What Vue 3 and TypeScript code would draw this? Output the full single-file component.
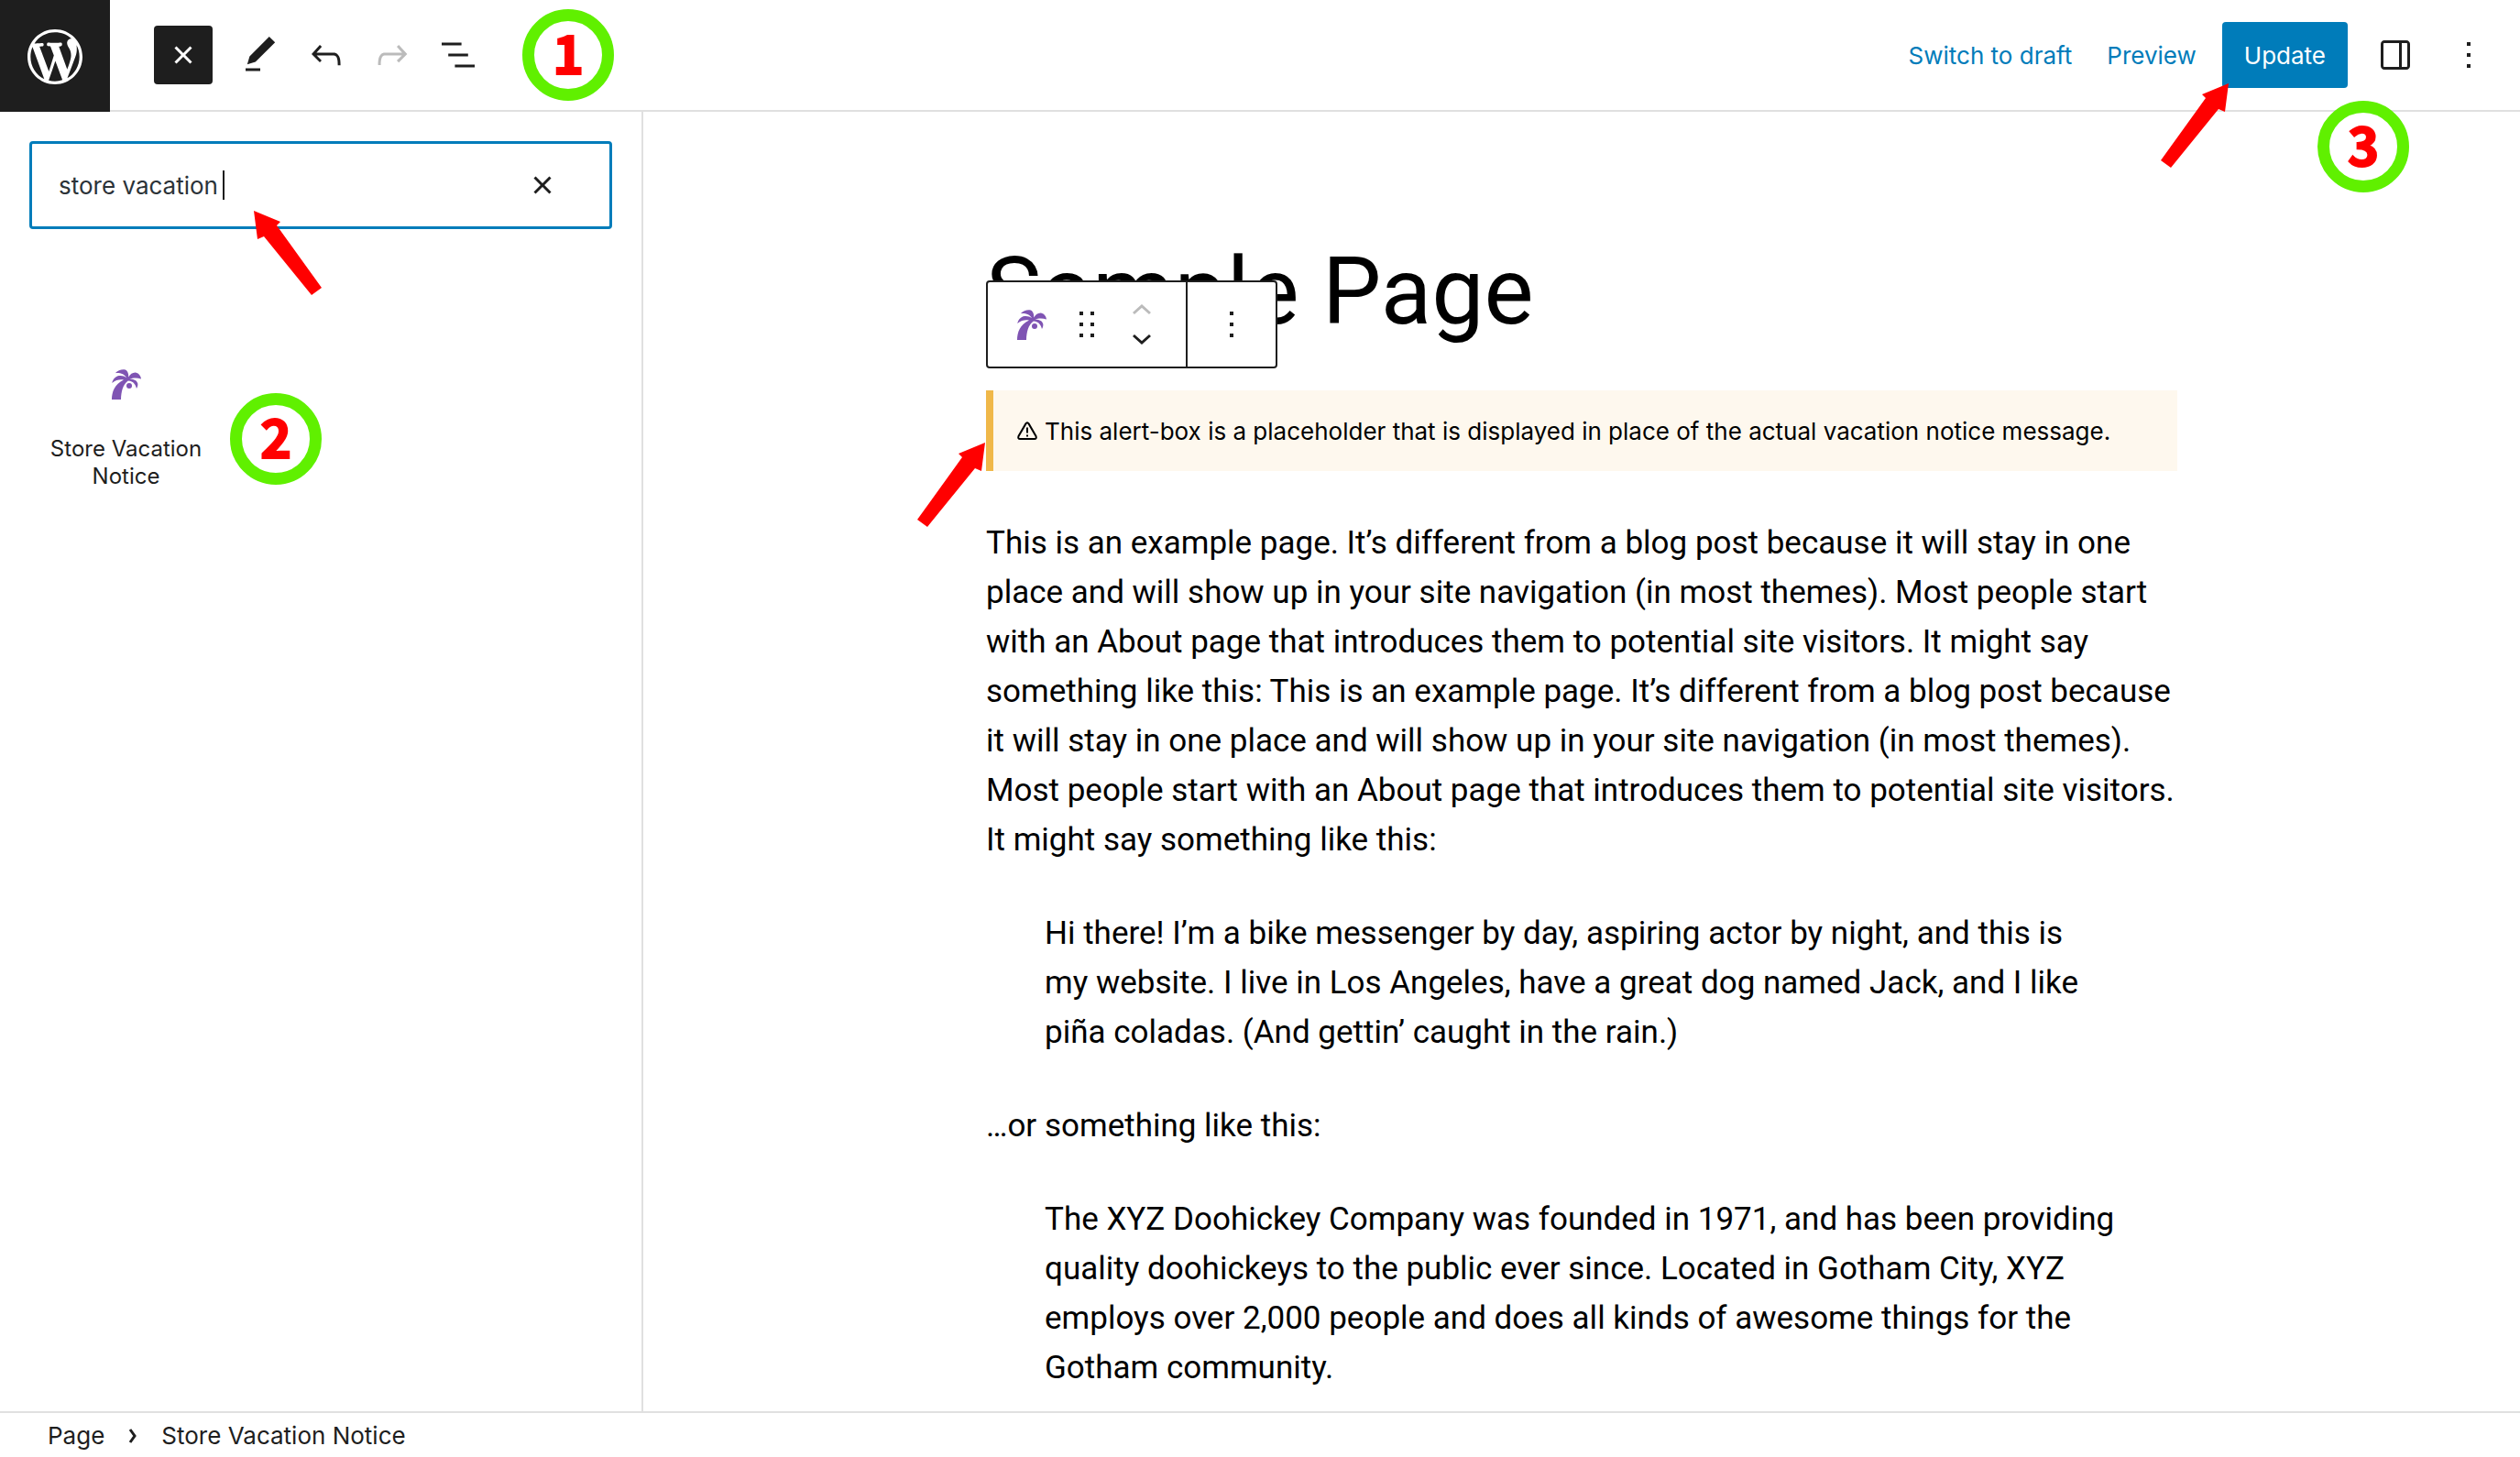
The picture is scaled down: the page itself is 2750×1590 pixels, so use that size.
<script setup lang="ts">
import { ref } from 'vue'

const search = ref('store vacation ')

const icons = {
  close: 'M12 13.06l3.712 3.713 1.061-1.06L13.061 12l3.712-3.712-1.06-1.06L12 10.938 8.288 7.227l-1.061 1.06L10.939 12l-3.712 3.712 1.06 1.061L12 13.061z',
  more: 'M11 5h2v2h-2zM11 11h2v2h-2zM11 17h2v2h-2z',
  drag: 'M8 5h2v2H8zM8 11h2v2H8zM8 17h2v2H8zM14 5h2v2h-2zM14 11h2v2h-2zM14 17h2v2h-2z',
  drawer:
    'M18 4H6c-1.1 0-2 .9-2 2v12c0 1.1.9 2 2 2h12c1.1 0 2-.9 2-2V6c0-1.1-.9-2-2-2zm-4 14.5H6c-.3 0-.5-.2-.5-.5V6c0-.3.2-.5.5-.5h8v13zm4.5-.5c0 .3-.2.5-.5.5h-2.5v-13H18c.3 0 .5.2.5.5v12z',
  palm: 'M0 33C0 25 3 16 13 11.500C10 10.800 4.500 11 .3 15C1 11 4 7.500 8 7C11 6.600 14 7.500 16 9.200C14 5.500 9 3.500 3.700 4.200C6.500 1 10 0 13.500 .200C17 .500 18.500 4.500 18.200 8.500C20 5.500 22.500 3.700 25.500 3.600C29 3.700 31.500 7 32 10.500C28 9 23 9 19.500 10.700C24 10.500 27.500 12 28.300 15.500C28.600 17.500 28 19.500 27 21C26 17 24 13 17.800 12.500C12 17 10.300 24 10 33z',
  wordpress:
    'M20 10c0-5.51-4.49-10-10-10C4.48 0 0 4.49 0 10c0 5.52 4.48 10 10 10 5.51 0 10-4.48 10-10zM7.78 15.37L4.37 6.22c.55-.02 1.17-.08 1.17-.08.5-.06.44-1.13-.06-1.11 0 0-1.45.11-2.37.11-.18 0-.37 0-.58-.01C4.12 2.69 6.87 1.11 10 1.11c2.33 0 4.45.87 6.05 2.34-.68-.11-1.65.39-1.65 1.58 0 .74.45 1.36.9 2.1.35.61.55 1.36.55 2.46 0 1.49-1.4 5-1.4 5l-3.03-8.37c.54-.02.82-.17.82-.17.5-.05.44-1.25-.06-1.22 0 0-1.44.12-2.38.12-.87 0-2.33-.12-2.33-.12-.5-.03-.56 1.2-.06 1.22l.92.08 1.26 3.41zM17.41 10c.24-.64.74-1.87.43-4.25.7 1.29 1.05 2.71 1.05 4.25 0 3.29-1.73 6.24-4.4 7.78.97-2.59 1.94-5.2 2.92-7.78zM6.1 18.09C3.12 16.65 1.11 13.53 1.11 10c0-1.3.23-2.48.72-3.59C3.25 10.3 4.67 14.2 6.1 18.09zm4.03-6.63l2.58 6.98c-.86.29-1.76.45-2.71.45-.79 0-1.57-.11-2.29-.33.81-2.38 1.62-4.74 2.42-7.1z',
}

const tools = [
  {
    label: 'Tools',
    disabled: false,
    d: 'M20.1 5.1L16.9 2 6.2 12.7l-1.3 4.4 4.5-1.3L20.1 5.1zM4 20.8h8v-1.5H4v1.5z',
  },
  {
    label: 'Undo',
    disabled: false,
    d: 'M18.3 11.7c-.6-.6-1.4-.9-2.3-.9H6.7l2.9-3.3-1.1-1-4.5 5L8.5 16l1-1-2.7-2.7H16c.5 0 .9.2 1.3.5 1 1 1 3.4 1 4.5v.3h1.5v-.2c0-1.5 0-4.3-1.5-5.7z',
  },
  {
    label: 'Redo',
    disabled: true,
    d: 'M15.6 6.5l-1.1 1 2.9 3.3H8c-.9 0-1.7.3-2.3.9-1.4 1.5-1.4 4.2-1.4 5.6v.2h1.5v-.3c0-1.1 0-3.5 1-4.5.3-.3.7-.5 1.3-.5h9.2L14.5 15l1.1 1.1 4.6-4.6-4.6-5z',
  },
  {
    label: 'List view',
    disabled: false,
    d: 'M13.8 5.2H3v1.5h10.8V5.2zm-3.6 12v1.5H21v-1.5H10.2zm7.2-6H6.6v1.5h10.8v-1.5z',
  },
]

const arrow = '74,0 45,12 49,16 0,84 11,92 63,28 70,31'
</script>

<template>
  <div class="editor">
    <header class="topbar">
      <a class="logo" href="#" aria-label="View pages">
        <svg viewBox="-2 -2 24 24"><path :d="icons.wordpress" /></svg>
      </a>
      <div class="tools">
        <button class="inserter-toggle" type="button" aria-label="Toggle block inserter">
          <svg class="icon" viewBox="0 0 24 24"><path :d="icons.close" /></svg>
        </button>
        <div class="tool-group">
          <button
            v-for="tool in tools"
            :key="tool.label"
            class="icon-button"
            type="button"
            :aria-label="tool.label"
            :disabled="tool.disabled"
          >
            <svg class="icon" viewBox="0 0 24 24"><path :d="tool.d" /></svg>
          </button>
        </div>
        <span class="badge badge-first">1</span>
      </div>
      <div class="actions">
        <button class="text-button" type="button">Switch to draft</button>
        <button class="text-button" type="button">Preview</button>
        <div class="update-wrap">
          <button class="update" type="button">Update</button>
          <svg class="arrow arrow-update" viewBox="0 0 74 92"><polygon :points="arrow" /></svg>
        </div>
        <div class="panel-buttons">
          <button class="icon-button" type="button" aria-label="Settings">
            <svg class="icon" viewBox="0 0 24 24"><path :d="icons.drawer" /></svg>
          </button>
          <button class="icon-button" type="button" aria-label="Options">
            <svg class="icon" viewBox="0 0 24 24"><path :d="icons.more" /></svg>
          </button>
        </div>
      </div>
      <span class="badge badge-third">3</span>
    </header>

    <div class="body">
      <aside class="inserter">
        <div class="search">
          <input v-model="search" type="text" aria-label="Search for blocks and patterns" />
          <span class="caret"></span>
          <button class="clear" type="button" aria-label="Reset search">
            <svg class="icon" viewBox="0 0 24 24"><path :d="icons.close" /></svg>
          </button>
          <svg class="arrow arrow-search" viewBox="0 0 74 92"><polygon :points="arrow" /></svg>
        </div>
        <div class="results">
          <button class="block-item" type="button">
            <svg class="palm" viewBox="0 0 32 33">
              <path :d="icons.palm" />
              <circle cx="19" cy="18" r="3" />
            </svg>
            <span>Store Vacation Notice</span>
          </button>
          <span class="badge">2</span>
        </div>
      </aside>

      <main class="canvas">
        <article class="content">
          <h1>Sample Page</h1>
          <div class="notice">
            <div class="block-toolbar">
              <div class="toolbar-group">
                <button class="toolbar-button" type="button" aria-label="Store Vacation Notice">
                  <svg class="palm" viewBox="0 0 32 33">
                    <path :d="icons.palm" />
                    <circle cx="19" cy="18" r="3" />
                  </svg>
                </button>
                <button class="toolbar-button" type="button" aria-label="Drag">
                  <svg class="icon" viewBox="0 0 24 24"><path :d="icons.drag" /></svg>
                </button>
                <div class="movers">
                  <button type="button" aria-label="Move up" disabled>
                    <svg viewBox="0 0 20 12"><path d="M1 10L10 2l9 8" /></svg>
                  </button>
                  <button type="button" aria-label="Move down">
                    <svg viewBox="0 0 20 12"><path d="M1 2l9 8 9-8" /></svg>
                  </button>
                </div>
              </div>
              <div class="toolbar-group">
                <button class="toolbar-button" type="button" aria-label="Options">
                  <svg class="icon" viewBox="0 0 24 24"><path :d="icons.more" /></svg>
                </button>
              </div>
            </div>
            <svg class="warning" viewBox="0 0 22 20">
              <path d="M9.400 2.400Q11 0 12.600 2.400L20.500 16Q21.500 18.800 18.800 19H3.200Q.500 18.800 1.500 16z" />
              <path d="M11 6.500v6M11 14.500v2" />
            </svg>
            <p>This alert-box is a placeholder that is displayed in place of the actual vacation notice message.</p>
            <svg class="arrow arrow-notice" viewBox="0 0 74 92"><polygon :points="arrow" /></svg>
          </div>
          <p>
            This is an example page. It’s different from a blog post because it will stay in one place and will show up
            in your site navigation (in most themes). Most people start with an About page that introduces them to
            potential site visitors. It might say something like this: This is an example page. It’s different from a
            blog post because it will stay in one place and will show up in your site navigation (in most themes). Most
            people start with an About page that introduces them to potential site visitors. It might say something like
            this:
          </p>
          <blockquote>
            Hi there! I’m a bike messenger by day, aspiring actor by night, and this is my&nbsp;website. I live in Los
            Angeles, have a great dog named Jack, and I like piña&nbsp;coladas. (And gettin’ caught in the rain.)
          </blockquote>
          <p>…or something like this:</p>
          <blockquote>
            The XYZ Doohickey Company was founded in 1971, and has been providing quality doohickeys to the public ever
            since. Located in Gotham City, XYZ employs over 2,000 people and does all kinds of awesome things for the
            Gotham community.
          </blockquote>
        </article>
      </main>
    </div>

    <footer class="breadcrumb">
      <a href="#">Page</a>
      <svg viewBox="0 0 10 16"><path d="M2 1l5 7-5 7" /></svg>
      <span>Store Vacation Notice</span>
    </footer>
  </div>
</template>

<style>
body {
  margin: 0;
  background: #fff;
}
</style>

<style scoped>
* {
  box-sizing: border-box;
}

.editor {
  display: flex;
  flex-direction: column;
  height: 100vh;
  overflow: hidden;
  background: #fff;
  color: #1e1e1e;
  font-family: Inter, 'Liberation Sans', sans-serif;
  font-size: 26px;
  line-height: 32px;
}

button {
  display: flex;
  align-items: center;
  justify-content: center;
  padding: 0;
  border: 0;
  background: none;
  color: inherit;
  font: inherit;
}

svg {
  display: block;
  flex: none;
  fill: currentColor;
}

.icon {
  width: 48px;
  height: 48px;
}

button:disabled {
  color: #bbb;
}

.topbar {
  position: relative;
  z-index: 2;
  flex: none;
  display: flex;
  align-items: center;
  height: 122px;
  border-bottom: 2px solid #e0e0e0;
}

.logo {
  display: flex;
  align-items: center;
  justify-content: center;
  align-self: flex-start;
  width: 120px;
  height: 122px;
  margin-bottom: -2px;
  padding-top: 2px;
  background: #1e1e1e;
  color: #fff;
}

.logo svg {
  width: 72px;
  height: 72px;
}

.tools {
  display: flex;
  align-items: center;
  gap: 16px;
  padding-left: 48px;
}

.inserter-toggle {
  width: 64px;
  height: 64px;
  border-radius: 4px;
  background: #1e1e1e;
  color: #fff;
}

.tool-group {
  display: flex;
}

.icon-button {
  width: 72px;
  height: 72px;
}

.badge {
  display: flex;
  flex: none;
  align-items: center;
  justify-content: center;
  width: 100px;
  height: 100px;
  padding-bottom: 8px;
  border: 13px solid #60f000;
  border-radius: 50%;
  background: #fff;
  color: #f00;
  font-family: 'Noto Sans CJK JP', sans-serif;
  font-size: 58px;
  font-weight: 700;
  line-height: 66px;
  -webkit-text-stroke: 2px #f00;
}

.badge-first {
  margin-left: 18px;
}

.badge-third {
  position: absolute;
  top: 110px;
  right: 121px;
}

.actions {
  display: flex;
  align-items: center;
  gap: 38px;
  margin-left: auto;
  padding-right: 20px;
}

.text-button,
.update {
  padding-top: 2px;
}

.text-button {
  color: #007cba;
}

.update-wrap {
  position: relative;
  margin-left: -10px;
}

.update {
  height: 72px;
  padding-right: 24px;
  padding-left: 24px;
  border-radius: 4px;
  background: #007cba;
  color: #fff;
}

.panel-buttons {
  display: flex;
  gap: 8px;
  margin-left: -22px;
}

.arrow {
  position: absolute;
  width: 74px;
  height: 92px;
  color: #f00;
}

.arrow-update {
  top: 67px;
  left: -67px;
}

.body {
  flex: 1;
  display: flex;
  min-height: 0;
}

.inserter {
  flex: none;
  width: 702px;
  padding: 32px;
  border-right: 2px solid #e0e0e0;
}

.search {
  position: relative;
  display: flex;
  align-items: center;
  height: 96px;
  padding: 0 49px 0 29px;
  border: 3px solid #007cba;
  border-radius: 4px;
}

.search input {
  flex: 1;
  min-width: 0;
  padding: 2px 0 0;
  border: 0;
  outline: 0;
  background: none;
  color: #2c3338;
  font: inherit;
}

.caret {
  position: absolute;
  top: 29px;
  left: 208px;
  width: 2px;
  height: 32px;
  background: #1e1e1e;
}

.arrow-search {
  top: 73px;
  left: 242px;
  transform: scaleX(-1);
}

.results {
  display: flex;
  align-items: flex-start;
  gap: 8px;
  padding-top: 153px;
}

.block-item {
  flex-direction: column;
  gap: 39px;
  width: 211px;
  color: #1e1e1e;
  font-size: 24px;
  line-height: 30px;
}

.palm {
  width: 32px;
  height: 33px;
  color: #7f54b3;
}

.results .badge {
  margin-top: 26px;
}

.canvas {
  flex: 1;
  min-width: 0;
  overflow: hidden;
  color: #000;
}

.content {
  max-width: 1300px;
  margin: 0 auto;
  padding-top: 132px;
  font-family: Roboto, Inter, sans-serif;
  font-size: 35px;
  line-height: 54px;
}

h1 {
  margin: 0 0 44px;
  font-size: 102px;
  font-weight: 400;
  line-height: 128px;
}

.content p,
.content blockquote {
  margin: 0 0 48px;
}

.content blockquote {
  padding: 0 64px;
}

.content .notice {
  position: relative;
  display: flex;
  align-items: center;
  gap: 8px;
  height: 88px;
  margin-bottom: 52px;
  padding-left: 26px;
  border-left: 8px solid #f0b849;
  background: #fef8ee;
  font-family: Inter, 'Liberation Sans', sans-serif;
  font-size: 26px;
  line-height: 32px;
}

.content .notice p {
  margin: 0;
  padding-top: 2px;
}

.warning {
  width: 22px;
  height: 20px;
  fill: none;
  stroke: currentColor;
  stroke-width: 2;
}

.arrow-notice {
  top: 57px;
  left: -83px;
}

.block-toolbar {
  position: absolute;
  top: -120px;
  left: -8px;
  display: flex;
  height: 96px;
  border: 2px solid #1e1e1e;
  border-radius: 4px;
  background: #fff;
  color: #1e1e1e;
}

.toolbar-group {
  display: flex;
  align-items: center;
  gap: 12px;
  padding: 0 24px;
}

.toolbar-group + .toolbar-group {
  border-left: 2px solid #1e1e1e;
}

.toolbar-button {
  width: 48px;
  height: 48px;
}

.movers {
  display: flex;
  flex-direction: column;
  gap: 20px;
  width: 48px;
}

.movers svg,
.breadcrumb svg {
  fill: none;
  stroke: currentColor;
  stroke-width: 3;
}

.movers svg {
  width: 20px;
  height: 12px;
}

.breadcrumb {
  flex: none;
  display: flex;
  align-items: center;
  height: 50px;
  padding-top: 2px;
  padding-left: 52px;
  border-top: 2px solid #e0e0e0;
  background: #fff;
}

.breadcrumb a {
  color: inherit;
  text-decoration: none;
}

.breadcrumb svg {
  width: 10px;
  height: 16px;
  margin: 0 26px;
}
</style>
